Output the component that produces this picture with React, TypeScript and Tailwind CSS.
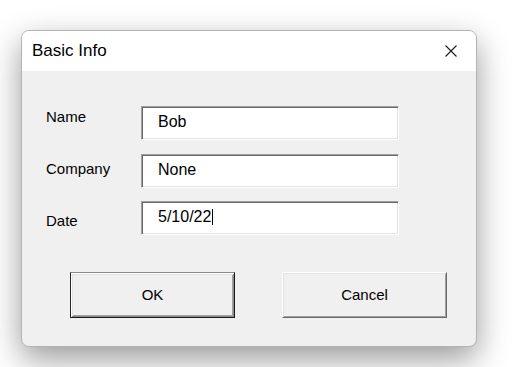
import React from "react";

const fields = [
  { label: "Name", value: "Bob" },
  { label: "Company", value: "None" },
  { label: "Date", value: "5/10/22", focused: true },
];

const CloseIcon = () => (
  <svg width="12" height="12" viewBox="0 0 12 12" className="block">
    <path d="M0.5 0.5 L11.5 11.5 M11.5 0.5 L0.5 11.5" stroke="#1a1a1a" strokeWidth="1.1" fill="none" />
  </svg>
);

const TextBox = ({ value, focused }: { value: string; focused?: boolean }) => (
  <div className="h-[34px] w-[258px] bg-white border border-t-[#a0a0a0] border-l-[#a0a0a0] border-r-white border-b-white shadow-[inset_1px_1px_0_#696969,inset_-1px_-1px_0_#e3e3e3] flex items-center pl-[16px] pb-[2px]">
    <span className="text-[16px] text-black leading-[18px]">{value}</span>
    {focused && <span className="ml-[1px] w-px h-[16px] bg-black" />}
  </div>
);

export default function App() {
  return (
    <div className="min-h-[367px] bg-white pt-[30px] pl-[21px] font-['Liberation_Sans',Arial,sans-serif]">
      <div className="w-[456px] rounded-[8px] border border-[#b3b3b3] bg-[#f0f0f0] overflow-hidden shadow-[0_12px_32px_rgba(0,0,0,0.4)]">
        <div className="h-[40px] bg-white flex items-center justify-between pl-[10px] pr-[19px]">
          <span className="text-[17px] text-black leading-[20px]">Basic Info</span>
          <CloseIcon />
        </div>

        <div className="pl-[24px] pb-[28px]">
          <div className="flex items-start">
            <div className="w-[95px] pt-[37px] flex flex-col gap-[34px]">
              {fields.map((f) => (
                <span key={f.label} className="text-[15px] leading-[18px] text-black">
                  {f.label}
                </span>
              ))}
            </div>
            <div className="pt-[35px] flex flex-col gap-[13.5px]">
              {fields.map((f) => (
                <TextBox key={f.label} value={f.value} focused={f.focused} />
              ))}
            </div>
          </div>

          <div className="mt-[37px] ml-[24px] flex gap-[47px]">
            <button
              type="button"
              className="h-[46px] w-[165px] bg-[#f0f0f0] border border-t-[#8a8a8a] border-l-[#262626] border-r-[#1a1a1a] border-b-[#1a1a1a] shadow-[inset_1px_1px_0_#ffffff,inset_-1px_-1px_0_#8c8c8c,inset_2px_2px_0_#e3e3e3,inset_-2px_-2px_0_#a0a0a0] text-[15px] text-black"
            >
              OK
            </button>
            <button
              type="button"
              className="h-[46px] w-[165px] bg-[#f0f0f0] border border-t-white border-l-white border-r-[#696969] border-b-[#696969] shadow-[inset_1px_1px_0_#e3e3e3,inset_-1px_-1px_0_#a0a0a0] text-[15px] text-black"
            >
              Cancel
            </button>
          </div>
        </div>
      </div>
    </div>
  );
}
